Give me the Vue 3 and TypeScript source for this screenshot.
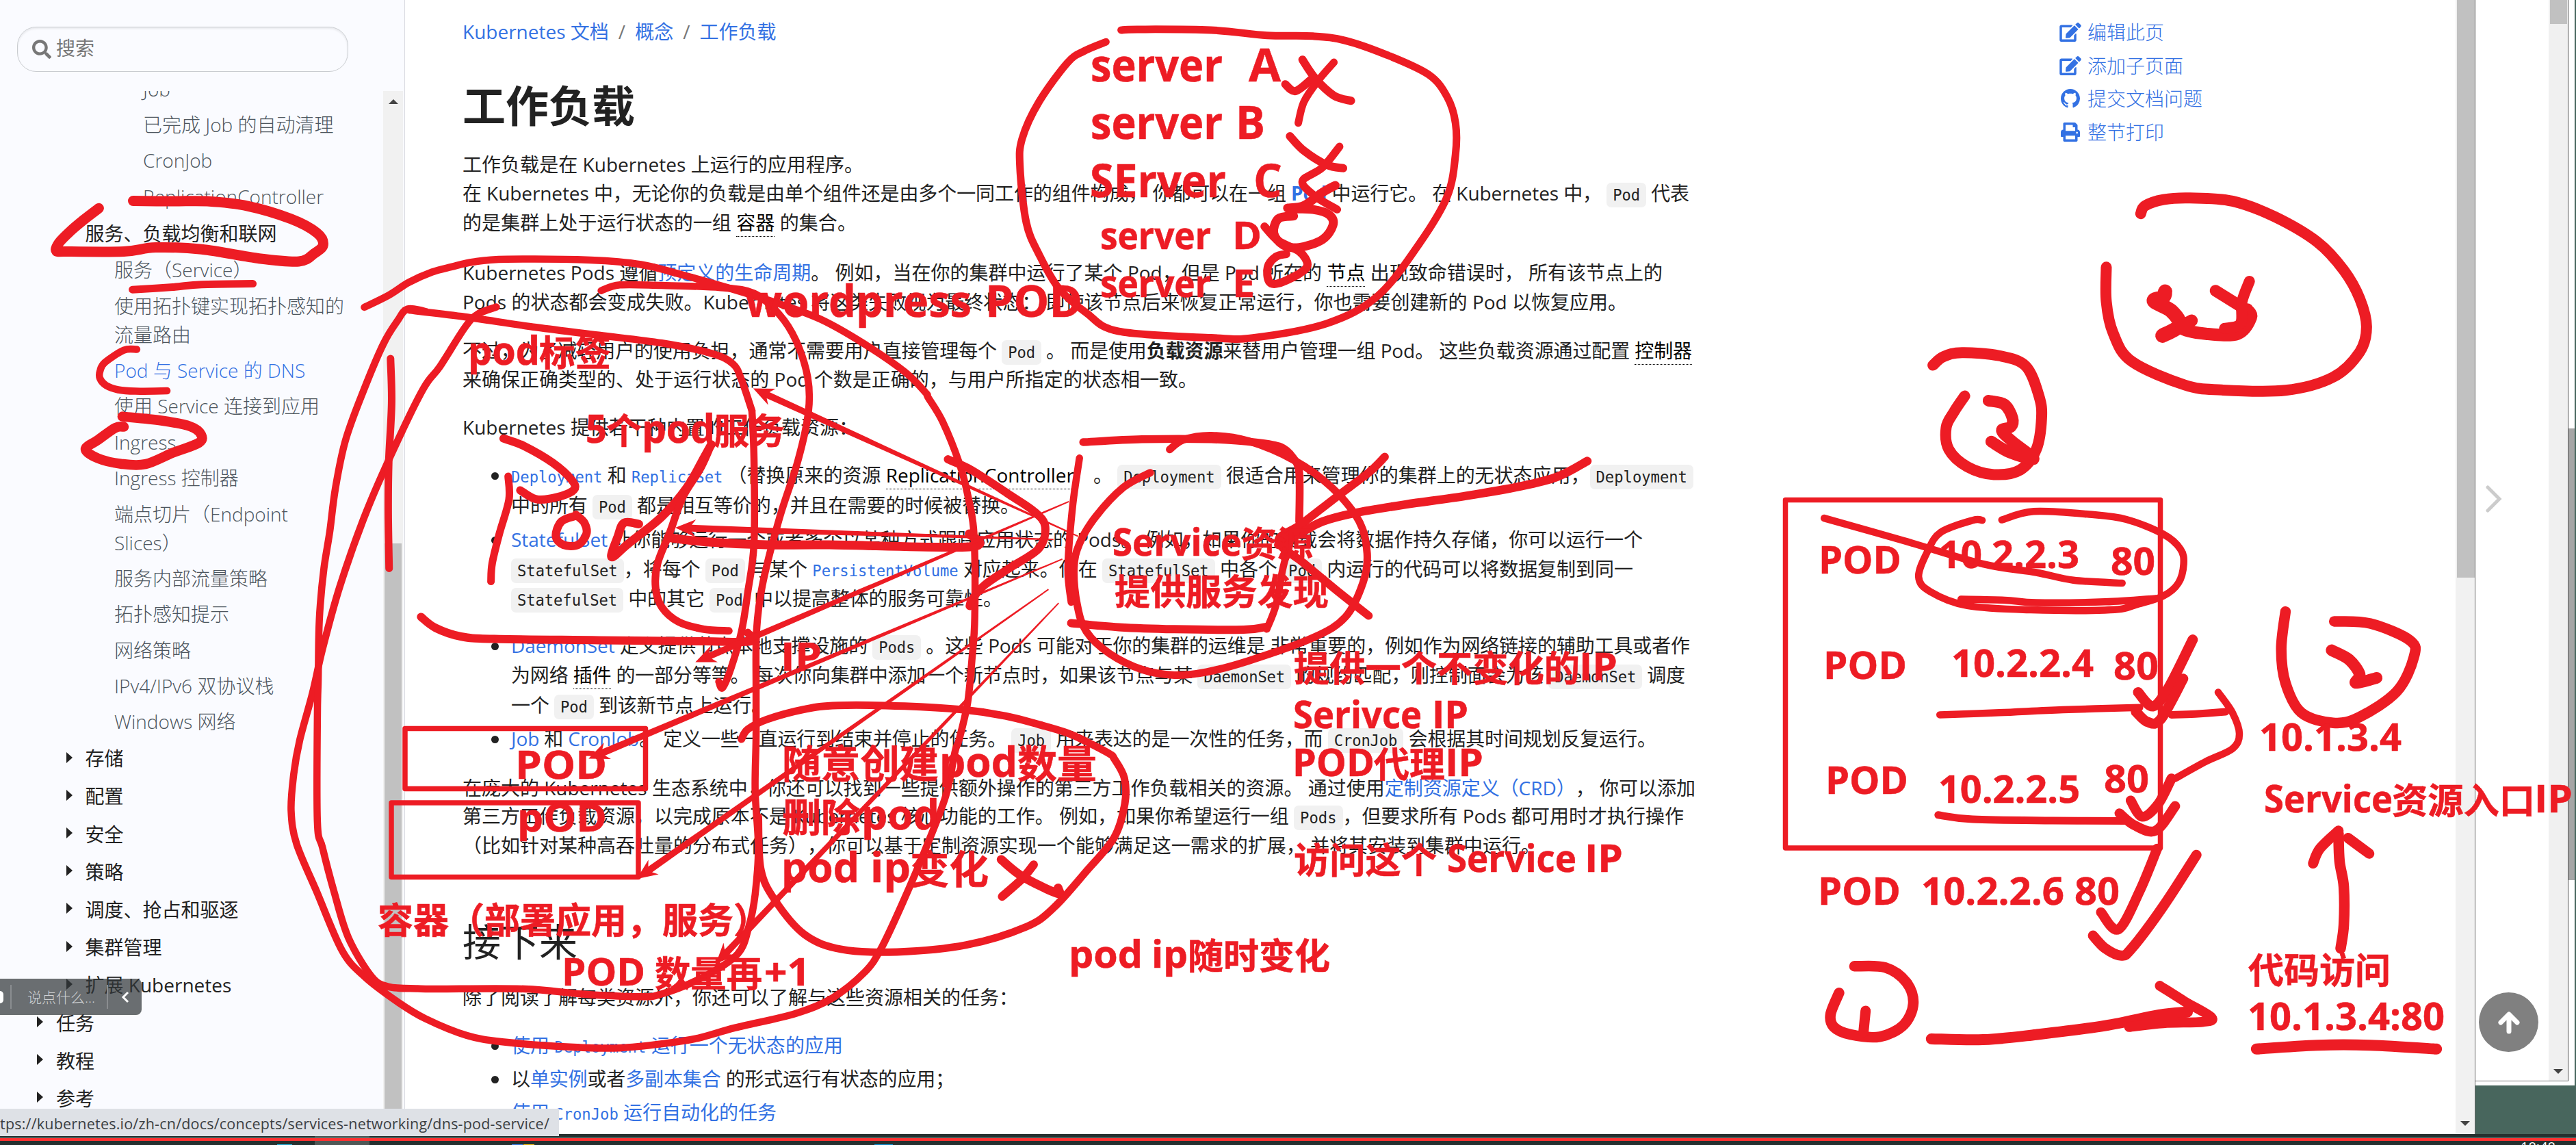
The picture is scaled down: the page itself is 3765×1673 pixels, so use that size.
<script setup lang="ts">
import { onMounted, ref } from 'vue'

/* ---------- sidebar ---------- */
interface NavItem { text: string; level: number; kind: 'leaf' | 'open' | 'section'; active?: boolean }
const nav: NavItem[] = [
  { text: 'Job', level: 3, kind: 'leaf' },
  { text: '已完成 Job 的自动清理', level: 3, kind: 'leaf' },
  { text: 'CronJob', level: 3, kind: 'leaf' },
  { text: 'ReplicationController', level: 3, kind: 'leaf' },
  { text: '服务、负载均衡和联网', level: 1, kind: 'open' },
  { text: '服务（Service）', level: 2, kind: 'leaf' },
  { text: '使用拓扑键实现拓扑感知的\n流量路由', level: 2, kind: 'leaf' },
  { text: 'Pod 与 Service 的 DNS', level: 2, kind: 'leaf', active: true },
  { text: '使用 Service 连接到应用', level: 2, kind: 'leaf' },
  { text: 'Ingress', level: 2, kind: 'leaf' },
  { text: 'Ingress 控制器', level: 2, kind: 'leaf' },
  { text: '端点切片（Endpoint\nSlices）', level: 2, kind: 'leaf' },
  { text: '服务内部流量策略', level: 2, kind: 'leaf' },
  { text: '拓扑感知提示', level: 2, kind: 'leaf' },
  { text: '网络策略', level: 2, kind: 'leaf' },
  { text: 'IPv4/IPv6 双协议栈', level: 2, kind: 'leaf' },
  { text: 'Windows 网络', level: 2, kind: 'leaf' },
  { text: '存储', level: 1, kind: 'section' },
  { text: '配置', level: 1, kind: 'section' },
  { text: '安全', level: 1, kind: 'section' },
  { text: '策略', level: 1, kind: 'section' },
  { text: '调度、抢占和驱逐', level: 1, kind: 'section' },
  { text: '集群管理', level: 1, kind: 'section' },
  { text: '扩展 Kubernetes', level: 1, kind: 'section' },
  { text: '任务', level: 0, kind: 'section' },
  { text: '教程', level: 0, kind: 'section' },
  { text: '参考', level: 0, kind: 'section' },
]

/* ---------- article ----------
   Inline markup: {a|link} {c|code} {k|linked code} {g|glossary term} {b|bold}
   pitch: distance from the previous line, width: measure of the set line */
interface Line { src: string; pitch: number; width: number; item?: boolean; bullet?: boolean; heading?: boolean }
const lines: Line[] = [
  { src: '工作负载是在 Kubernetes 上运行的应用程序。', pitch: 0, width: 586 },
  { src: '在 Kubernetes 中，无论你的负载是由单个组件还是由多个一同工作的组件构成， 你都可以在一组 {p|Pod} 中运行它。 在 Kubernetes 中， {c|Pod} 代表', pitch: 41.5, width: 1793 },
  { src: '的是集群上处于运行状态的一组 {g|容器} 的集合。', pitch: 43, width: 576 },
  { src: 'Kubernetes Pods 遵循{a|预定义的生命周期}。 例如，当在你的集群中运行了某个 Pod，但是 Pod 所在的 {g|节点} 出现致命错误时， 所有该节点上的', pitch: 73, width: 1754 },
  { src: 'Pods 的状态都会变成失败。Kubernetes 将这类失败视为最终状态： 即使该节点后来恢复正常运行，你也需要创建新的 Pod 以恢复应用。', pitch: 43.5, width: 1702 },
  { src: '不过，为了减轻用户的使用负担，通常不需要用户直接管理每个 {c|Pod} 。 而是使用{b|负载资源}来替用户管理一组 Pod。 这些负载资源通过配置 {g|控制器}', pitch: 70.5, width: 1797 },
  { src: '来确保正确类型的、处于运行状态的 Pod 个数是正确的，与用户所指定的状态相一致。', pitch: 42.5, width: 1074 },
  { src: 'Kubernetes 提供若干种内置的工作负载资源：', pitch: 70, width: 578 },
  { src: '{k|Deployment} 和 {k|ReplicaSet} （替换原来的资源 {g|ReplicationController}）。 {c|Deployment} 很适合用来管理你的集群上的无状态应用，{c|Deployment}', pitch: 70, width: 1728, item: true, bullet: true },
  { src: '中的所有 {c|Pod} 都是相互等价的，并且在需要的时候被替换。', pitch: 43.5, width: 743, item: true },
  { src: '{a|StatefulSet} 让你能够运行一个或者多个以某种方式跟踪应用状态的 Pods。 例如，如果你的负载会将数据作持久存储，你可以运行一个', pitch: 50.5, width: 1654, item: true, bullet: true },
  { src: '{c|StatefulSet}，将每个 {c|Pod} 与某个 {k|PersistentVolume} 对应起来。你在 {c|StatefulSet} 中各个 {c|Pod} 内运行的代码可以将数据复制到同一', pitch: 42.5, width: 1640, item: true },
  { src: '{c|StatefulSet} 中的其它 {c|Pod} 中以提高整体的服务可靠性。', pitch: 43, width: 718, item: true },
  { src: '{a|DaemonSet} 定义提供节点本地支撑设施的 {c|Pods} 。这些 Pods 可能对于你的集群的运维是 非常重要的，例如作为网络链接的辅助工具或者作', pitch: 69.5, width: 1723, item: true, bullet: true },
  { src: '为网络 {g|插件} 的一部分等等。 每次你向集群中添加一个新节点时，如果该节点与某 {c|DaemonSet} 的规约匹配，则控制面会为该 {c|DaemonSet} 调度', pitch: 43, width: 1716, item: true },
  { src: '一个 {c|Pod} 到该新节点上运行。', pitch: 44, width: 379, item: true },
  { src: '{a|Job} 和 {a|CronJob}。 定义一些一直运行到结束并停止的任务。 {c|Job} 用来表达的是一次性的任务，而 {c|CronJob} 会根据其时间规划反复运行。', pitch: 49, width: 1674, item: true, bullet: true },
  { src: '在庞大的 Kubernetes 生态系统中，你还可以找到一些提供额外操作的第三方工作负载相关的资源。 通过使用{a|定制资源定义（CRD）}， 你可以添加', pitch: 71.5, width: 1802 },
  { src: '第三方工作负载资源，以完成原本不是 Kubernetes 核心功能的工作。 例如，如果你希望运行一组 {c|Pods}，但要求所有 Pods 都可用时才执行操作', pitch: 41.5, width: 1785 },
  { src: '（比如针对某种高吞吐量的分布式任务），你可以基于定制资源实现一个能够满足这一需求的扩展， 并将其安装到集群中运行。', pitch: 43, width: 1575 },
  { src: '接下来', pitch: 140, width: 168, heading: true },
  { src: '除了阅读了解每类资源外，你还可以了解与这些资源相关的任务：', pitch: 82, width: 812 },
  { src: '{a|使用 }{k|Deployment}{a| 运行一个无状态的应用}', pitch: 70, width: 485, item: true, bullet: true },
  { src: '以{a|单实例}或者{a|多副本集合} 的形式运行有状态的应用；', pitch: 49, width: 648, item: true, bullet: true },
  { src: '{a|使用 }{k|CronJob}{a| 运行自动化的任务}', pitch: 49, width: 388, item: true, bullet: true },
]
function parse(src: string): { kind: string; text: string }[] {
  const out: { kind: string; text: string }[] = []
  const re = /\{(\w)\|([^}]*)\}|([^{]+)/g
  let m: RegExpExecArray | null
  while ((m = re.exec(src))) out.push(m[1] ? { kind: m[1], text: m[2] } : { kind: 't', text: m[3] })
  return out
}
const root = ref<HTMLElement | null>(null)
/* Tracks every line to its measure */
function fitLines() {
  root.value?.querySelectorAll<HTMLElement>('[data-measure]').forEach((el) => {
    el.style.letterSpacing = '0px'
    const n = (el.textContent ?? '').length
    const diff = Number(el.dataset.measure) - el.getBoundingClientRect().width
    el.style.letterSpacing = `${(diff / n).toFixed(4)}px`
  })
}
onMounted(() => {
  fitLines()
  document.fonts.ready.then(fitLines)
})

const ICON = {
  edit: 'M402.6 83.2l90.2 90.2c3.8 3.8 3.8 10 0 13.8L274.4 405.6l-92.8 10.3c-12.4 1.4-22.9-9.1-21.5-21.5l10.3-92.8L388.8 83.2c3.8-3.8 10-3.8 13.8 0zm162-22.9l-48.8-48.8c-15.2-15.2-39.9-15.2-55.2 0l-35.4 35.4c-3.8 3.8-3.8 10 0 13.8l90.2 90.2c3.8 3.8 10 3.8 13.8 0l35.4-35.4c15.2-15.3 15.2-40 0-55.2zM384 346.2V448H64V128h229.8c3.2 0 6.2-1.3 8.5-3.5l40-40c7.6-7.6 2.2-20.5-8.5-20.5H48C21.5 64 0 85.5 0 112v352c0 26.5 21.5 48 48 48h352c26.5 0 48-21.5 48-48V306.2c0-10.7-12.9-16-20.5-8.5l-40 40c-2.2 2.3-3.5 5.3-3.5 8.5z',
  github: 'M8 0C3.58 0 0 3.58 0 8c0 3.54 2.29 6.53 5.47 7.59.4.07.55-.17.55-.38 0-.19-.01-.82-.01-1.49-2.01.37-2.53-.49-2.69-.94-.09-.23-.48-.94-.82-1.13-.28-.15-.68-.52-.01-.53.63-.01 1.08.58 1.23.82.72 1.21 1.87.87 2.33.66.07-.52.28-.87.51-1.07-1.78-.2-3.64-.89-3.64-3.95 0-.87.31-1.59.82-2.15-.08-.2-.36-1.02.08-2.12 0 0 .67-.21 2.2.82.64-.18 1.32-.27 2-.27s1.36.09 2 .27c1.53-1.04 2.2-.82 2.2-.82.44 1.1.16 1.92.08 2.12.51.56.82 1.27.82 2.15 0 3.07-1.87 3.75-3.65 3.95.29.25.54.73.54 1.48 0 1.07-.01 1.93-.01 2.2 0 .21.15.46.55.38A8.01 8.01 0 0 0 16 8c0-4.42-3.58-8-8-8z',
  print: 'M448 192V77.25c0-8.49-3.37-16.62-9.37-22.63L393.37 9.37c-6-6-14.14-9.37-22.63-9.37H96C78.33 0 64 14.33 64 32v160c-35.35 0-64 28.65-64 64v112c0 8.84 7.16 16 16 16h48v96c0 17.67 14.33 32 32 32h320c17.67 0 32-14.33 32-32v-96h48c8.84 0 16-7.16 16-16V256c0-35.35-28.65-64-64-64zm-64 256H128v-96h256v96zm0-224H128V64h192v48c0 8.84 7.16 16 16 16h48v96zm48 72c-13.25 0-24-10.75-24-24 0-13.26 10.75-24 24-24s24 10.74 24 24c0 13.25-10.75 24-24 24z',
  search: 'M505 442.7L405.3 343c-4.5-4.5-10.6-7-17-7H372c27.6-35.3 44-79.7 44-128C416 93.1 322.9 0 208 0S0 93.1 0 208s93.1 208 208 208c48.3 0 92.7-16.4 128-44v16.3c0 6.4 2.5 12.5 7 17l99.7 99.7c9.4 9.4 24.6 9.4 33.9 0l28.3-28.3c9.4-9.4 9.4-24.6.1-34zM208 336c-70.7 0-128-57.2-128-128 0-70.7 57.2-128 128-128 70.7 0 128 57.2 128 128 0 70.7-57.2 128-128 128z',
}
const actions = [
  { text: '编辑此页', icon: ICON.edit, box: '0 0 576 512', w: 32 },
  { text: '添加子页面', icon: ICON.edit, box: '0 0 576 512', w: 32 },
  { text: '提交文档问题', icon: ICON.github, box: '0 0 16 16', w: 28 },
  { text: '整节打印', icon: ICON.print, box: '0 0 512 512', w: 28 },
]

/* ---------- pen annotations ----------
   The board is divided into tiles, each with its own 1568-unit grid. */
const GRID = 1568
const tiles: Record<string, [number, number, number, number]> = {
  a: [0, 0, 660, 840], b: [0, 830, 660, 843], c: [600, 0, 960, 600], d: [1500, 0, 1060, 600],
  e: [600, 580, 960, 560], f: [1500, 580, 1060, 560], g: [500, 1080, 1060, 593], h: [1500, 1080, 1060, 593],
  i: [2550, 0, 1215, 720], j: [2550, 700, 1215, 973],
}
type Pt = [number, number]
function points(spec: string): Pt[] {
  const tok = spec.trim().split(/\s+/)
  const out: Pt[] = []
  let tile = tiles.a
  for (let i = 0; i < tok.length; i++) {
    if (tiles[tok[i]]) { tile = tiles[tok[i]]; continue }
    out.push([tile[0] + (Number(tok[i]) * tile[2]) / GRID, tile[1] + (Number(tok[i + 1]) * tile[3]) / GRID])
    i++
  }
  return out
}
function smooth(spec: string): string {
  const p = points(spec)
  let d = `M${p[0][0].toFixed(1)} ${p[0][1].toFixed(1)}`
  for (let i = 0; i < p.length - 1; i++) {
    const a = p[i - 1] ?? p[i], b = p[i], c = p[i + 1], e = p[i + 2] ?? c
    const n = [b[0] + (c[0] - a[0]) / 6, b[1] + (c[1] - a[1]) / 6, c[0] - (e[0] - b[0]) / 6, c[1] - (e[1] - b[1]) / 6, c[0], c[1]]
    d += 'C' + n.map((v) => v.toFixed(1)).join(' ')
  }
  return d
}
function arrow(spec: string): string {
  const [t, h] = points(spec)
  const len = Math.hypot(h[0] - t[0], h[1] - t[1])
  const ux = (h[0] - t[0]) / len, uy = (h[1] - t[1]) / len
  const at = (back: number, side: number) => `${(h[0] - ux * back - uy * side).toFixed(1)} ${(h[1] - uy * back + ux * side).toFixed(1)}`
  return `M${at(len, 1)}L${at(24, 5)}L${at(30, 13)}L${at(0, 0)}L${at(30, -13)}L${at(24, -5)}L${at(len, -1)}Z`
}
const strokes: [number, string][] = [
  [15, 'a 343 568 290 600 245 630 205 662 195 684 230 686 430 686 540 675 700 680 900 705 1038 713 1090 692 1122 668 1100 635 1010 597 860 562 720 549 600 549 462 548'],
  [11, 'a 460 790 600 783 700 776 878 774'],
  [10.5, 'a 475 953 430 955 365 988 348 1010 347 1032 370 1052 410 1063 470 1067 580 1066'],
  [14.5, 'a 430 1164 400 1167 340 1200 297 1225 340 1250 420 1265 505 1266 600 1235 690 1208 698 1185 660 1163 560 1147 425 1136'],
  [10.5, 'a 1265 838 1350 805 1420 770 1500 742 c 98 1019 150 1000 230 990 430 993 550 1010 650 1050 760 1100 880 1160 980 1220 1080 1310 1180 1420 1230 1500 e 1235 0 1270 100 1310 270 1330 400 1345 560 1347 900 1340 1080 1330 1250 1310 1400 g 1325 50 1305 220 1260 430 1210 640 1165 810 1130 900 1060 1000 980 1060 850 1115 770 1155 700 1175 600 1193 500 1190 350 1170 270 1145 180 1080 120 1015 50 920 b 1188 1040 1100 880 1030 750 1011 660 1020 560 1040 470 1085 340 1120 220 1180 50 a 1270 1400 1370 1220 1470 1060 c 70 1400 130 1250 160 1200 205 1172'],
  [10.5, 'c 815 1568 790 1450 770 1390 720 1350 600 1310 450 1280 300 1250 130 1210 0 1185 a 1480 850 1415 843 1380 875 1330 940 1260 1070 1200 1200 1165 1330 1145 1450 b 1125 0 1112 100 1107 180 1105 300 1102 400 1102 690 1120 760 1160 880 1210 1005 1290 1110 1350 1138 1450 1143 g 210 965 395 965 520 985 640 995 690 985 780 920 855 830 880 720 893 600 900 420 893 200 895 0 e 825 1200 826 960 840 770 880 500 925 260 950 60 c 948 1440 920 1300 880 1200 820 1120 740 1098 600 1090 500 1088 455 1110'],
  [10.5, 'c 815 1568 e 820 250 820 600 805 800 790 960 765 1110 745 1190 736 1165'],
  [11, 'a 1356 978 1360 1100 1350 1260 1348 1400 1351 1550'],
  [11, 'e 233 325 235 420 212 560 195 680 192 755'],
  [12, 'e 222 170 270 200 340 270 385 340 390 380 350 410 300 418 262 382'],
  [12, 'e 397 485 360 510 347 570 365 605 400 605 420 560 415 515 395 482'],
  [12.5, 'e 545 520 510 515 495 570 480 655 520 600 600 490 660 370 700 250 718 195'],
  [11, 'e 712 220 690 300 650 410 620 550 590 680 585 780 600 860 640 920 700 950 760 957'],
  [12, 'e 25 900 60 945 120 980 200 990 450 995 700 1000 812 1000 805 965'],
  [13, 'e 615 575 700 592 850 605 1000 605 1335 613 1334 560'],
  [12, 'e 1283 255 1340 300 1430 400 1490 470 1515 530 1500 620 1430 700 1370 770 1340 830 1335 855'],
  [11, 'e 790 1400 805 1360 850 1320 940 1278 1020 1262 1180 1265 1320 1280 1420 1305 1500 1340 f 89 1375 130 1410 180 1460 h 190 75 212 150 213 250 190 380 130 510 60 650 g 1479 725 1350 795 1200 822 1080 812 1000 755 935 620 905 500 900 300'],
  [13, 'g 1425 465 1470 530 1545 595 1548 575'],
  [12.5, 'g 1495 485 1470 540 1427 608'],
  [11, 'd 205 115 240 112 400 115 520 135 620 138 690 155 780 210 870 285 910 370 928 470 928 590 910 750 850 930 760 1130 650 1235 490 1290 400 1290 200 1265 130 1195 70 1100 c 1500 970 1470 850 1455 640 1460 530 1500 390 1568 240 d 125 195 172 160'],
  [12, 'd 560 322 582 348 615 305'], [12, 'd 597 228 625 300 665 365 702 385'], [11, 'd 665 238 630 310 600 390 588 470'],
  [12, 'd 570 520 600 575 650 630 685 642'], [11.5, 'd 677 560 640 640 597 692 625 750 672 800'],
  [13, 'd 668 708 640 735 600 785 565 795 620 800 655 820 663 860 640 915 590 945 555 935 535 890 545 835 578 825'],
  [12, 'd 515 865 545 920 590 960 608 1010 590 1045 545 1082 525 1075 522 1020 540 980 562 970'],
  [11.5, 'f 123 185 250 173 400 173 500 187 550 205 575 245 590 310 590 510'],
  [10.5, 'f 115 250 100 450 90 700 97 840'],
  [12, 'f 97 925 200 942 320 950 470 952 520 940'],
  [10.5, 'f 520 950 540 850 555 700 575 560'],
  [11, 'f 310 215 340 175 400 158 480 180 580 260 660 370 720 510 737 640 728 760 690 900 620 985 480 1080 390 1125 320 1138 250 1115 180 1050 130 960 110 850 103 700 115 600 150 490 210 370 268 310'],
  [12, 'f 775 245 740 310 670 410 595 520 545 590 600 680 670 790 740 895'],
  [12.5, 'f 1213 262 1150 325 1070 365 950 405 820 440 710 475 640 510 590 560 545 605'],
  [16, 'i 747 680 755 655 790 635 840 630 920 640 1000 690 1080 770 1130 860 1160 950 1173 1040 1160 1120 1110 1200 1020 1242 900 1241 830 1225 730 1150 695 1060 682 960 682 850'],
  [21, 'i 793 928 790 945 772 958 805 990 820 1035 788 1068'],
  [18, 'i 843 1020 825 1045 870 1062 930 1062 955 1010 948 985'], [17, 'i 888 925 945 985'], [16, 'i 952 895 938 960 935 1030 905 1045'],
  [16, 'i 355 1162 375 1135 410 1122 480 1132 530 1165 555 1260 560 1330 550 1430 520 1495 470 1510 420 1485 385 1430 380 1360 395 1310 415 1260'],
  [17, 'i 460 1275 490 1287 505 1330 502 1358 485 1370 505 1405 545 1460 500 1440 465 1405'],
  [10.5, 'j 150 92 300 145 450 200 550 220 620 238 712 245'],
  [10.5, 'j 485 96 545 76 650 83 720 95 790 130 822 165 828 200 818 245 790 275 740 295 690 308 540 308 420 298 350 265 328 230 345 170 370 125 430 97 448 97'],
  [10.5, 'j 408 283 490 285 550 291 680 289 775 281'],
  [15, 'j 845 378 800 490 770 535 742 502'], [15, 'j 827 470 785 565 760 572 738 548'],
  [10.5, 'j 368 555 480 550 600 543 745 538'], [11, 'j 805 555 850 553 907 548'],
  [10.5, 'j 893 502 920 550 933 600 920 635 870 665 812 705'],
  [14.5, 'j 805 705 780 765 750 795 728 757'],
  [11, 'j 365 791 430 801 580 804 720 805'], [14.5, 'j 707 787 735 815 775 828 812 770'],
  [14.5, 'j 778 870 745 970 705 1060 672 1020'], [15, 'j 852 885 790 1005 730 1105 710 1122 680 1105 657 1075'],
  [15.5, 'j 1020 312 1012 400 1020 480 1050 550 1110 574 1160 560 1230 500 1262 420 1255 380 1180 340 1112 335'],
  [17, 'j 1107 403 1140 425 1160 460 1153 480 1192 468'],
  [15.5, 'j 1120 835 1122 900 1130 960 1130 1050 1124 1105'], [15, 'j 1072 905 1085 870 1120 828'], [15, 'j 1138 845 1178 882'],
  [15.5, 'j 178 1210 162 1260 168 1290 200 1308 255 1313 300 1285 318 1235 305 1185 265 1150 207 1147'],
  [15, 'j 228 1252 224 1302'],
  [16, 'j 352 1318 450 1320 550 1308 680 1287 780 1262 835 1255'],
  [14.5, 'j 783 1193 830 1230 880 1267 865 1278 790 1281 725 1290'],
  [16, 'j 965 1342 1080 1333 1180 1333 1305 1342'],
]
const arrows = [
  'f 112 570 c 818 1483', 'e 1535 583 632 535', 'f 92 428 e 680 1085',
  'f 78 663 e 425 1480', 'f 48 787 g 637 540', 'f 70 843 g 808 868',
]
const boxes = [
  [592, 1064.5, 351.5, 88], [572, 1173, 361, 108.5], [2609.5, 730.5, 548, 508.5],
]

/* text, left, right, baseline, size */
type Label = [string, number, number, number, number]
const latin: Label[] = [
  ['server', 1594, 1787, 119.4, 66], ['A', 1825, 1872, 119.4, 66],
  ['server', 1594, 1787, 203.4, 66], ['B', 1806, 1849, 203.4, 66],
  ['SErver', 1593, 1792, 287.5, 66], ['C', 1832, 1874, 287.5, 66],
  ['server', 1608, 1770, 364, 55], ['D', 1801, 1844, 364, 55],
  ['server', 1608, 1770, 434, 55], ['E', 1801, 1834, 434, 55],
  ['wordpress', 1089, 1420, 463, 65], ['POD', 1440, 1582, 463, 65],
  ['pod', 684, 789, 533, 58], ['5', 856, 887, 646.8, 58], ['pod', 938, 1045, 646.8, 58],
  ['IP', 1141, 1201, 980, 58], ['POD', 753, 887, 1137.5, 58], ['pOD', 756, 887, 1215, 58],
  ['POD', 821, 943, 1440, 55], ['+1', 1117, 1184, 1440, 55],
  ['pod', 1373, 1487, 1135, 61], ['pod', 1259, 1373, 1212, 61], ['pod', 1142, 1256, 1289, 61], ['ip', 1272, 1331, 1289, 61],
  ['Service', 1626, 1815, 812, 56], ['IP', 2308, 2364, 993.5, 55],
  ['Serivce', 1890, 2078, 1064, 55], ['IP', 2093, 2146, 1064, 55],
  ['POD', 1889, 2009, 1133.7, 55], ['IP', 2112, 2168, 1133.7, 55],
  ['Service', 2115, 2304, 1274, 55], ['IP', 2316, 2372, 1274, 55],
  ['pod', 1562, 1670, 1413.6, 56], ['ip', 1683, 1736, 1413.6, 56],
  ['POD', 2658, 2779, 838.4, 55], ['10', 2834, 2897, 830, 55], ['2.2.3', 2911, 3039, 830, 55], ['80', 3085, 3150, 839.6, 55],
  ['POD', 2665, 2787, 991.6, 55], ['10.2.2.4', 2852, 3060, 989, 55], ['80', 3089, 3155, 993, 55],
  ['POD', 2668, 2789, 1159.8, 55], ['10.2.2.5', 2833, 3040, 1172.8, 55], ['80', 3075, 3141, 1158, 55],
  ['POD', 2657, 2778, 1321.7, 55], ['10.2.2.6', 2808, 3017, 1321.7, 55], ['80', 3032, 3098, 1321.7, 55],
  ['10.1.3.4', 3302, 3510, 1097, 55], ['Service', 3309, 3497, 1187, 55], ['IP', 3704, 3760, 1187, 55],
  ['10.1.3.4:80', 3285, 3573, 1504.8, 55],
]
const han: Label[] = [
  ['标签', 788, 893, 534.5, 52], ['个', 886, 938, 648.5, 52], ['服务', 1043, 1147, 648.5, 52],
  ['容器（部署应用，服务）', 552, 1124, 1364, 52], ['数量再', 957, 1114, 1442, 52],
  ['随意创建', 1143, 1372, 1136.5, 57], ['数量', 1487, 1603, 1136.5, 57], ['删除', 1143, 1257, 1214.5, 57], ['变化', 1330, 1445, 1290.5, 57],
  ['资源', 1814, 1919, 813.5, 52], ['提供服务发现', 1629, 1942, 884, 52], ['提供一个不变化的', 1891, 2309, 995.5, 52],
  ['代理', 2008, 2112, 1135.5, 52], ['访问这个', 1891, 2100, 1275.5, 52], ['随时变化', 1736, 1944, 1415.5, 52],
  ['资源入口', 3496, 3705, 1188.5, 52], ['代码访问', 3286, 3494, 1436.5, 52],
]
</script>

<template>
  <div ref="root" class="screen">
    <div class="desk">
      <aside class="side">
        <div class="search">
          <svg viewBox="0 0 512 512" width="28" height="28"><path :d="ICON.search" fill="#777" /></svg>
          <span>搜索</span>
        </div>
        <div class="tree">
          <ul class="nav">
            <li v-for="n in nav" :key="n.text" :class="['lv' + n.level, n.kind, { active: n.active }]">
              <i v-if="n.kind === 'section'" class="tri"></i>{{ n.text }}
            </li>
          </ul>
          <div class="side-bar"><i class="up"></i><b></b></div>
        </div>
      </aside>

      <main class="article">
        <nav class="crumbs">
          <a>Kubernetes 文档</a><em>/</em><a>概念</a><em>/</em><a>工作负载</a>
        </nav>
        <h1>工作负载</h1>
        <div
          v-for="(l, i) in lines" :key="i"
          :class="['line', { item: l.item, bullet: l.bullet, heading: l.heading }]"
          :style="{ marginTop: l.pitch ? l.pitch - 42 + 'px' : '0' }"
        ><span class="set" :data-measure="l.width"><span v-for="(s, j) in parse(l.src)" :key="j" :class="'s-' + s.kind">{{ s.text }}</span></span></div>
      </main>

      <div class="actions">
        <a v-for="a in actions" :key="a.text">
          <svg :viewBox="a.box" :width="a.w" height="28"><path :d="a.icon" fill="#3371e3" /></svg><span>{{ a.text }}</span>
        </a>
      </div>

      <div class="main-bar"><b></b><i class="down"></i></div>

      <div class="behind">
        <div class="pane">
          <div class="pane-body">
            <svg class="next" viewBox="0 0 24 40" width="24" height="40"><path d="M3 3L20 20L3 37" fill="none" stroke="#ccc" stroke-width="5" stroke-linecap="round" /></svg>
            <div class="to-top">
              <svg viewBox="0 0 34 34" width="34" height="34"><path d="M17 30V6M5 17L17 5L29 17" fill="none" stroke="#fff" stroke-width="7" stroke-linecap="round" stroke-linejoin="round" /></svg>
            </div>
          </div>
          <div class="pane-bar"><b></b><i class="down"></i></div>
          <div class="edge"><b></b></div>
        </div>
      </div>
    </div>

    <footer class="taskbar">
      <i class="hl"></i><i class="redline"></i>
      <i class="app a1"></i><i class="app a2"></i><i class="app a3"></i><i class="app a4"></i>
      <span class="clock">18:48</span>
    </footer>

    <div class="status"><span class="set" data-measure="803">tps://kubernetes.io/zh-cn/docs/concepts/services-networking/dns-pod-service/</span></div>
    <div class="say">
      <i class="dot"></i><i class="sep"></i><span>说点什么...</span><i class="sep"></i>
      <svg viewBox="0 0 12 18" width="12" height="18"><path d="M10 2L3 9L10 16" fill="none" stroke="#fff" stroke-width="3" /></svg>
    </div>

    <svg class="ink" viewBox="0 0 3765 1673" width="3765" height="1673">
      <g class="pen">
        <path v-for="(s, i) in strokes" :key="i" :d="smooth(s[1])" :stroke-width="s[0]" />
        <rect v-for="(b, i) in boxes" :key="'b' + i" :x="b[0]" :y="b[1]" :width="b[2]" :height="b[3]" stroke-width="7.5" />
      </g>
      <path v-for="a in arrows" :key="a" :d="arrow(a)" fill="#ed1c24" />
      <g class="latin">
        <text v-for="(t, i) in latin" :key="i" :x="t[1]" :y="t[3]" :font-size="t[4]" :textLength="t[2] - t[1]" lengthAdjust="spacingAndGlyphs">{{ t[0] }}</text>
      </g>
      <g class="han">
        <text v-for="(t, i) in han" :key="i" :x="t[1]" :y="t[3]" :font-size="t[4]" :textLength="t[2] - t[1]" lengthAdjust="spacingAndGlyphs">{{ t[0] }}</text>
      </g>
    </svg>
  </div>
</template>

<style>
html, body { margin: 0; background: #fff; overflow: hidden; }
</style>

<style scoped>
.screen { position: relative; width: 3765px; height: 1673px; overflow: hidden; background: #fff; color: #222; font: 28px/42px "Open Sans", "Noto Sans CJK SC", sans-serif; text-spacing-trim: space-all; display: flex; flex-direction: column; }
i, em { font-style: normal; }
ul { list-style: none; margin: 0; padding: 0; }
.desk { display: flex; height: 1657px; }

.side { width: 591px; flex: none; height: 1657px; background: #fafbff; border-right: 1px solid #d9dbe0; overflow: hidden; }
.search { box-sizing: border-box; margin: 39px 0 0 25px; width: 484px; height: 66px; border: 1px solid #c9ccd0; border-radius: 28px; display: flex; align-items: center; padding-left: 21px; gap: 7px; color: #777; box-shadow: inset 0 2px 3px rgba(0, 0, 0, .08); }
.search span { position: relative; top: -2px; }
.tree { display: flex; justify-content: space-between; margin-top: 28px; height: 1524px; overflow: hidden; }
.nav { margin-top: -29.6px; }
.nav li { white-space: pre; position: relative; color: #222; padding: 6.6px 0; }
.nav li.leaf { padding: 5.2px 0; font-weight: 300; color: #4d565e; }
.nav li.active { color: #3371e3; }
.lv0 { margin-left: 82px; }
.lv1 { margin-left: 124.5px; }
.lv2 { margin-left: 167px; }
.lv3 { margin-left: 209px; }
.tri { position: absolute; left: -28px; top: 18px; border-left: 9px solid #222; border-top: 8.5px solid transparent; border-bottom: 8.5px solid transparent; }
.side-bar { width: 29px; margin-right: 2px; background: #f1f1f1; }
.up, .down { display: block; width: 0; margin: 12px auto 0; border: 7px solid transparent; border-top: 0; border-bottom: 7px solid #444; }
.down { border: 7px solid transparent; border-bottom: 0; border-top: 7px solid #444; margin: 0 auto; }
.side-bar b { display: block; width: 25px; margin: 642px 0 0 2px; height: 900px; background: #c1c1c1; }

.article { flex: none; width: 2418px; padding: 25px 0 0 84px; box-sizing: border-box; white-space: pre; height: 1657px; overflow: hidden; }
.crumbs { height: 42px; }
.crumbs a, .s-a { color: #3371e3; }
.crumbs em { color: #777; padding: 0 14px; }
h1 { margin: 55px 0 0; font-size: 63px; line-height: 64px; font-weight: 700; height: 64px; }
h1 + .line { margin-top: 33px !important; }
.line { height: 42px; line-height: 42px; }
.item { padding-left: 71px; position: relative; }
.bullet::before { content: ""; position: absolute; left: 42px; top: 16.5px; width: 11px; height: 11px; border-radius: 50%; background: #222; }
.set { display: inline-block; }
.heading { font-size: 56px; }
.s-p { color: #3371e3; font-weight: 700; }
.s-b { font-weight: 700; }
.s-k, .s-c { font-family: "DejaVu Sans Mono", monospace; font-size: 22.2px; }
.s-k { color: #3371e3; }
.s-c { background: #f1f1f1; border-radius: 7px; padding: 5px 9px; }
.s-g { color: #000; border-bottom: 1.5px dotted #000; padding-bottom: 1px; }

.actions { flex: 1; padding: 26px 0 0; display: flex; flex-direction: column; gap: 6.7px; }
.actions a { display: flex; align-items: center; height: 42px; color: #3371e3; font-weight: 300; }
.actions svg { flex: none; margin-right: 9px; }
.actions svg[width="28"] { margin: 0 11px 0 2px; }

.main-bar { flex: none; width: 28px; background: #f1f1f1; border-right: 1px solid #666; height: 1657px; }
.main-bar b { display: block; margin-left: 2px; height: 844px; background: #c1c1c1; }
.main-bar .down { margin-top: 794px; }
.behind { flex: none; width: 147px; background: #48665d; }
.pane { display: flex; height: 1586px; background: #fff; }
.pane-body { position: relative; flex: none; width: 107px; height: 1579px; border-bottom: 1px solid #777; }
.next { position: absolute; left: 15px; top: 709px; }
.to-top { position: absolute; left: 5px; top: 1450px; width: 87px; height: 87px; border-radius: 50%; background: #808080; display: flex; align-items: center; justify-content: center; }
.pane-bar { flex: none; width: 28px; height: 1579px; background: #f0f0f0; border-right: 1px solid #555; border-bottom: 1px solid #777; }
.pane-bar b { display: block; width: 25px; margin-left: 2px; height: 35px; background: #c1c1c1; }
.pane-bar .down { margin-top: 1527px; }
.edge { width: 9px; border-right: 2px solid #48665d; }
.edge b { display: block; margin-top: 626px; height: 660px; background: #a6a6a6; }

.taskbar { position: relative; height: 16px; background: #25302f; overflow: hidden; }
.taskbar i { position: absolute; }
.hl { left: 460px; top: 0; width: 80px; height: 16px; background: #4f5856; }
.redline { left: 0; top: 5px; width: 3765px; height: 3.5px; background: #fe3131; border-top: 1px solid #63807a; }
.taskbar .app { top: 15px; height: 1px; width: 16px; background: #4285f4; }
.taskbar .a1 { left: 405px; width: 22px; background: #2ab6e0; }
.taskbar .a2 { left: 748px; }
.taskbar .a3 { left: 765px; background: #fbc415; }
.taskbar .a4 { left: 1278px; width: 27px; background: #1296db; }
.clock { position: absolute; right: 30px; top: 5px; font-size: 20px; line-height: 28px; color: #fff; }

.status { position: absolute; left: 0; top: 1620px; width: 817px; height: 40px; background: #dee1e6; color: #3c4043; font-size: 21.5px; line-height: 43px; white-space: pre; }
.say { position: absolute; left: 0; top: 1430px; width: 207px; height: 53px; border-radius: 0 8px 8px 0; background: rgba(50, 55, 58, .72); display: flex; align-items: center; color: #d0d2d4; font-size: 21px; font-weight: 300; overflow: hidden; }
.say .dot { width: 5px; height: 18px; border-radius: 0 9px 9px 0; background: #fff; margin-right: 10px; }
.say .sep { width: 2px; height: 35px; background: #8a8d90; }
.say span { width: 116px; padding-left: 23px; white-space: nowrap; }
.say svg { margin-left: 19px; }

.ink { position: absolute; left: 0; top: 0; pointer-events: none; }
.pen { fill: none; stroke: #ed1c24; stroke-linecap: round; stroke-linejoin: round; }
.latin, .han { fill: #ed1c24; stroke: #ed1c24; stroke-width: .6; font-weight: 700; }
.latin { font-family: "Open Sans", sans-serif; }
.han { font-family: "Noto Sans CJK SC", sans-serif; }
</style>
